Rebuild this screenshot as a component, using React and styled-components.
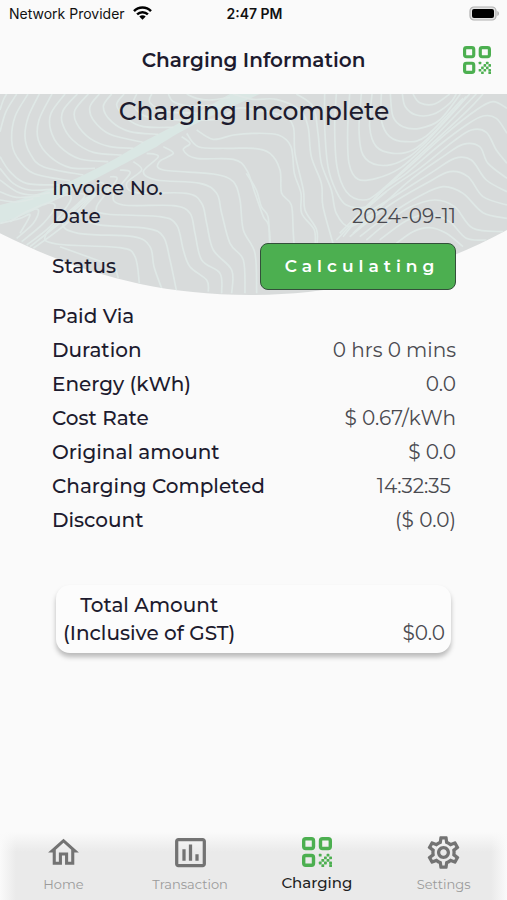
import React from 'react';
import styled, { createGlobalStyle } from 'styled-components';
import { MdOutlineHome, MdInsertChartOutlined, MdOutlineSettings } from 'react-icons/md';

const GlobalStyle = createGlobalStyle`
  * {
    box-sizing: border-box;
  }

  body {
    margin: 0;
    background: #fafafa;
    font-family: Montserrat, Inter, sans-serif;
    color: #1d1b2e;
  }
`;

const Page = styled.div`
  display: flex;
  flex-direction: column;
  min-height: 100vh;
`;

const StatusBar = styled.div`
  display: grid;
  grid-template-columns: 1fr auto 1fr;
  align-items: center;
  height: 26px;
  padding: 0 7px 0 9px;
  font-family: Inter, sans-serif;
  font-size: 14px;
  color: #111;
`;

const Carrier = styled.span`
  display: flex;
  align-items: center;
  gap: 8px;
`;

const Clock = styled.time`
  font-weight: 600;
`;

const BatterySlot = styled.span`
  display: flex;
  justify-content: flex-end;
`;

const Header = styled.header`
  display: grid;
  grid-template-columns: 40px 1fr 40px;
  align-items: center;
  height: 68px;
  padding: 0 10px;
`;

const HeaderTitle = styled.h1`
  margin: 0;
  text-align: center;
  font-size: 20px;
  line-height: 24px;
  font-weight: 600;
`;

const IconButton = styled.button`
  display: flex;
  justify-content: center;
  padding: 0;
  border: 0;
  background: none;
  color: #4caf50;
  cursor: pointer;
`;

const Main = styled.main`
  display: grid;
  grid-template-columns: 100%;
  flex: 1;
  align-content: start;
`;

const Backdrop = styled.svg`
  grid-area: 1 / 1;
  display: block;
  width: 100%;
  height: 202px;
`;

const Content = styled.div`
  grid-area: 1 / 1;
  display: flex;
  flex-direction: column;
  padding: 0 51px 48px 52px;
`;

const Heading = styled.h2`
  margin: 0 0 46px;
  text-align: center;
  font-size: 25px;
  line-height: 34px;
  font-weight: 500;
`;

const Details = styled.dl`
  margin: 0;
`;

const rowHeights = { compact: '28px', normal: '34px', tall: '69px' };

const Row = styled.div`
  display: flex;
  align-items: center;
  justify-content: space-between;
  height: ${({ $size }) => rowHeights[$size]};
  padding-top: ${({ $size }) => ($size === 'tall' ? '3px' : '0')};
  font-size: 20px;
`;

const Label = styled.dt`
  font-weight: 500;
`;

const Value = styled.dd`
  margin: 0;
  color: #4a4a50;
  font-weight: 400;
  white-space: pre;
`;

const StatusButton = styled.button`
  width: 196px;
  height: 47px;
  padding: 0 0 0 8px;
  border: 1px solid #33503a;
  border-radius: 8px;
  background: #4caf50;
  color: #fff;
  font: inherit;
  font-size: 17px;
  font-weight: 600;
  letter-spacing: 5px;
  cursor: pointer;
`;

const TotalCard = styled.section`
  display: flex;
  align-items: flex-end;
  justify-content: space-between;
  margin: 48px 5px 0 4px;
  padding: 6px 6px 6px 7px;
  border-radius: 14px;
  background: #fcfcfc;
  box-shadow: 0 4px 5px rgba(0, 0, 0, 0.26);
  font-size: 20px;
  line-height: 28px;
`;

const TotalLabel = styled.div`
  text-align: center;
  font-weight: 500;
`;

const TotalValue = styled.div`
  color: #4a4a50;
`;

const TabBar = styled.nav`
  display: grid;
  grid-template-columns: repeat(4, 1fr);
  height: 68px;
  background:
    linear-gradient(to bottom, #fafafa, rgba(250, 250, 250, 0) 20px),
    linear-gradient(to right, #fafafa, rgba(250, 250, 250, 0) 16px),
    linear-gradient(to left, #fafafa, rgba(250, 250, 250, 0) 16px),
    #eaeaea;
`;

const Tab = styled.a`
  display: flex;
  flex-direction: column;
  align-items: center;
  gap: 4px;
  padding-top: 2px;
  color: ${({ $active }) => ($active ? '#1f1f1f' : '#9b9b9b')};
  font-size: ${({ $active }) => ($active ? '15px' : '13px')};
  font-weight: ${({ $active }) => ($active ? 500 : 400)};
  line-height: ${({ $active }) => ($active ? '18px' : '20px')};
  text-decoration: none;
`;

const TabIcon = styled.span`
  display: flex;
  align-items: center;
  justify-content: center;
  height: 36px;
  color: ${({ $active }) => ($active ? '#4caf50' : '#737373')};
`;

// smooth path through a flat list of x, y pairs
function curve(...n) {
  const pts = [];
  for (let i = 0; i < n.length; i += 2) pts.push([n[i], n[i + 1]]);
  let d = `M${pts[0]}`;
  for (let i = 0; i < pts.length - 1; i++) {
    const p0 = pts[i - 1] || pts[i];
    const p1 = pts[i];
    const p2 = pts[i + 1];
    const p3 = pts[i + 2] || p2;
    const c1 = [p1[0] + (p2[0] - p0[0]) / 6, p1[1] + (p2[1] - p0[1]) / 6];
    const c2 = [p2[0] - (p3[0] - p1[0]) / 6, p2[1] - (p3[1] - p1[1]) / 6];
    d += `C${c1} ${c2} ${p2}`;
  }
  return d;
}

const leftContours = [
  curve(20, 12, 10, 30, 0, 60),
  curve(50, 12, 18, 65, 0, 125),
  curve(0, 200, 30, 245, 80, 280, 190, 285),
  curve(0, 235, 40, 280, 90, 300, 170, 297),
  curve(0, 270, 50, 305, 100, 315, 150, 308),
  curve(0, 305, 50, 322, 120, 318),
  curve(0, 330, 50, 336, 100, 326),
  curve(84, 12, 45, 80, 35, 150, 50, 200, 100, 250, 210, 272),
  curve(118, 12, 85, 80, 75, 140, 90, 190, 130, 230, 250, 255),
  curve(156, 12, 117, 90, 115, 150, 150, 200, 210, 233, 285, 235),
  curve(195, 12, 153, 70, 152, 120, 180, 170, 240, 207, 325, 215),
  curve(232, 12, 190, 60, 187, 100, 218, 150, 280, 187, 365, 195),
  curve(265, 12, 225, 60, 230, 100, 270, 145, 330, 170, 400, 175),
  curve(298, 12, 270, 50, 280, 90, 330, 133, 430, 157),
  curve(335, 12, 310, 50, 335, 95, 390, 125, 475, 133),
  curve(372, 12, 350, 45, 380, 85, 430, 110, 520, 112),
  curve(410, 12, 400, 45, 440, 80, 560, 92),
  curve(455, 12, 450, 38, 500, 65, 600, 70),
  curve(505, 12, 520, 35, 570, 48, 650, 45),
  curve(560, 12, 590, 25, 630, 30, 690, 22),
  curve(600, 90, 660, 85, 710, 55, 770, 60, 850, 78, 880, 110, 885, 190, 910, 300, 915, 360, 950, 420, 950, 470),
  curve(590, 120, 640, 148, 700, 135, 760, 130, 835, 135, 873, 170, 883, 250, 903, 310, 905, 370, 943, 420, 945, 470),
  curve(560, 130, 595, 170, 680, 175, 760, 175, 810, 190, 840, 240, 845, 310, 874, 345, 880, 430, 890, 600),
  curve(545, 140, 570, 160, 550, 180, 590, 205, 700, 208, 740, 240, 765, 310, 790, 380, 808, 420, 815, 600),
  curve(490, 170, 520, 190, 478, 215, 490, 240, 640, 252, 700, 275, 720, 330, 730, 420, 765, 490, 770, 610),
  curve(440, 190, 475, 200, 430, 245, 470, 270, 600, 280, 650, 310, 665, 370, 690, 460, 730, 510, 735, 610),
  curve(400, 215, 425, 240, 380, 280, 410, 308, 560, 310, 605, 340, 620, 400, 640, 480, 695, 540, 695, 610),
  curve(360, 240, 390, 250, 340, 315, 370, 345, 520, 347, 570, 370, 585, 430, 605, 510, 660, 550, 665, 610),
  curve(330, 260, 350, 270, 290, 350, 320, 372, 480, 380, 530, 405, 550, 480, 570, 530, 620, 570, 625, 605),
  curve(290, 275, 310, 290, 240, 370, 290, 403, 440, 415, 490, 440, 510, 510, 530, 605),
  curve(260, 295, 280, 310, 190, 395, 235, 430, 400, 440, 450, 470, 462, 530, 485, 595),
  curve(230, 310, 250, 325, 140, 430, 170, 462, 360, 473, 405, 500, 418, 580),
  curve(180, 470, 290, 510, 340, 530, 355, 565),
  curve(0, 400, 60, 385, 90, 375, 60, 430),
  curve(30, 395, 80, 365, 115, 360, 100, 400, 50, 445),
  curve(80, 365, 140, 340, 165, 350, 130, 400, 65, 455),
  curve(130, 345, 200, 315, 210, 335, 150, 410, 80, 465),
  curve(90, 470, 190, 390, 250, 330, 310, 300),
  curve(100, 475, 200, 400, 270, 325, 340, 290),
];

const rightContours = [
  curve(-60, 12, 0, 28, 70, 28, 140, 60, 165, 110, 175, 200, 205, 280, 210, 350, 240, 460),
  curve(130, 12, 180, 50, 195, 130, 205, 220, 235, 300, 250, 370, 290, 410, 360, 370),
  curve(215, 12, 215, 110, 225, 230, 248, 300, 280, 345, 340, 350, 400, 305),
  curve(250, 12, 245, 110, 252, 230, 280, 305, 330, 330, 380, 305, 500, 195, 640, 65, 690, 12),
  curve(290, 12, 284, 120, 288, 220, 315, 268, 370, 265, 440, 235, 520, 165, 670, 12),
  curve(325, 12, 318, 120, 330, 195, 375, 225, 440, 215, 510, 165, 650, 12),
  curve(357, 12, 350, 110, 370, 170, 420, 190, 480, 180, 540, 130, 640, 20),
  curve(385, 12, 385, 90, 410, 140, 460, 155, 520, 138, 630, 25),
  curve(412, 12, 420, 80, 450, 110, 500, 115, 560, 90, 622, 12),
  curve(448, 12, 457, 50, 490, 75, 540, 73, 590, 40, 610, 12),
  curve(480, 12, 500, 38, 545, 42, 590, 12),
  curve(762, 55, 720, 35, 670, 60, 580, 130, 480, 220, 380, 310, 260, 430),
  curve(762, 130, 730, 85, 690, 78, 640, 105, 560, 165, 460, 250, 380, 310, 270, 440),
  curve(762, 220, 730, 180, 700, 127, 655, 120, 600, 155, 500, 235, 380, 320, 250, 450),
  curve(762, 265, 705, 220, 680, 170, 630, 163, 570, 200, 460, 280, 300, 430),
  curve(762, 305, 700, 270, 655, 210, 605, 205, 540, 245, 430, 315, 340, 370),
  curve(762, 345, 690, 320, 645, 260, 590, 245, 520, 280, 410, 345, 290, 440),
  curve(762, 385, 690, 368, 630, 310, 570, 290, 500, 318, 400, 380, 320, 440),
  curve(750, 425, 660, 415, 605, 350, 545, 330, 470, 352, 400, 400, 340, 450),
  curve(700, 450, 640, 445, 590, 395, 530, 373, 460, 392, 380, 450),
  curve(630, 470, 580, 430, 530, 413, 480, 425, 430, 460),
  curve(-20, 250, 10, 300, 25, 350, 45, 380, 50, 460, 55, 600),
];

function TopoBackdrop() {
  return (
    <Backdrop viewBox="0 12 1521 606" preserveAspectRatio="none" aria-hidden="true">
      <defs>
        <clipPath id="bowl">
          <path d="M0 12H1521V420C1300 540 1040 615 750 615C450 615 220 540 0 430Z" />
        </clipPath>
      </defs>
      <g clipPath="url(#bowl)">
        <rect y="12" width="1521" height="606" fill="#d8dbdb" />
        <path
          d="M0 345C180 300 320 225 430 155C560 90 640 40 690 12H780C650 70 560 110 470 170C330 245 220 300 150 335C90 370 50 385 0 398Z"
          fill="#dae7e4"
        />
        <g fill="none" stroke="#dfe8e6" strokeWidth="5">
          {leftContours.map((d) => (
            <path key={d} d={d} />
          ))}
          <g transform="translate(759 0)">
            {rightContours.map((d) => (
              <path key={d} d={d} />
            ))}
          </g>
        </g>
      </g>
    </Backdrop>
  );
}

// filled cells of the 5x5 grid in the QR icon's last corner
const qrDots = [
  [0, 0], [3, 0],
  [2, 1], [4, 1],
  [1, 2], [3, 2],
  [0, 3], [2, 3], [4, 3],
  [1, 4], [4, 4],
];

function QrIcon({ size }) {
  return (
    <svg width={size} height={size} viewBox="0 0 30 30" aria-hidden="true">
      <g fill="none" stroke="currentColor" strokeWidth="3.4">
        <rect x="1.7" y="1.7" width="9.8" height="9.8" rx="2" />
        <rect x="18.5" y="1.7" width="9.8" height="9.8" rx="2" />
        <rect x="1.7" y="18.5" width="9.8" height="9.8" rx="2" />
      </g>
      <g fill="currentColor">
        {qrDots.map(([x, y]) => (
          <rect key={`${x}-${y}`} x={16.8 + x * 2.6} y={16.8 + y * 2.6} width="2.8" height="2.8" rx="0.6" />
        ))}
      </g>
    </svg>
  );
}

function WifiIcon() {
  return (
    <svg width="19" height="14" viewBox="0 0 19 14" aria-hidden="true">
      <g fill="none" stroke="#000" strokeWidth="2.5">
        <path d="M1 5.1C5.7.4 13.3.4 18 5.1" />
        <path d="M4.1 8.3c3-2.9 7.8-2.9 10.8 0" />
      </g>
      <path d="M6.3 10.5c1.8-1.7 4.6-1.7 6.4 0L9.5 13.7z" />
    </svg>
  );
}

function BatteryIcon() {
  return (
    <svg width="31" height="15" viewBox="0 0 31 15" aria-hidden="true">
      <rect x="1" y="1" width="26" height="13" rx="4" fill="#e4e4e4" stroke="#b0b0b0" strokeWidth="1.2" />
      <rect x="3" y="3" width="22" height="9" rx="2" />
      <path d="M28.4 5c2 .8 2 4.2 0 5z" fill="#aaa" />
    </svg>
  );
}

const details = [
  { label: 'Invoice No.', value: '', size: 'compact' },
  { label: 'Date', value: '2024-09-11', size: 'compact' },
  { label: 'Status', value: <StatusButton type="button">Calculating</StatusButton>, size: 'tall' },
  { label: 'Paid Via', value: '' },
  { label: 'Duration', value: '0 hrs 0 mins' },
  { label: 'Energy (kWh)', value: '0.0' },
  { label: 'Cost Rate', value: '$ 0.67/kWh' },
  { label: 'Original amount', value: '$ 0.0' },
  { label: 'Charging Completed', value: '14:32:35 ' },
  { label: 'Discount', value: '($ 0.0)' },
];

const tabs = [
  { label: 'Home', icon: <MdOutlineHome size={37} /> },
  { label: 'Transaction', icon: <MdInsertChartOutlined size={39} /> },
  { label: 'Charging', icon: <QrIcon size={30} />, active: true },
  { label: 'Settings', icon: <MdOutlineSettings size={39} /> },
];

function App() {
  return (
    <Page>
      <GlobalStyle />
      <StatusBar>
        <Carrier>
          Network Provider
          <WifiIcon />
        </Carrier>
        <Clock>2:47 PM</Clock>
        <BatterySlot>
          <BatteryIcon />
        </BatterySlot>
      </StatusBar>
      <Header>
        <span />
        <HeaderTitle>Charging Information</HeaderTitle>
        <IconButton type="button" aria-label="Scan QR code">
          <QrIcon size={28} />
        </IconButton>
      </Header>
      <Main>
        <TopoBackdrop />
        <Content>
          <Heading>Charging Incomplete</Heading>
          <Details>
            {details.map(({ label, value, size = 'normal' }) => (
              <Row key={label} $size={size}>
                <Label>{label}</Label>
                <Value>{value}</Value>
              </Row>
            ))}
          </Details>
          <TotalCard>
            <TotalLabel>
              Total Amount
              <br />
              (Inclusive of GST)
            </TotalLabel>
            <TotalValue>$0.0</TotalValue>
          </TotalCard>
        </Content>
      </Main>
      <TabBar>
        {tabs.map(({ label, icon, active }) => (
          <Tab key={label} href={`#${label.toLowerCase()}`} $active={active}>
            <TabIcon $active={active}>{icon}</TabIcon>
            {label}
          </Tab>
        ))}
      </TabBar>
    </Page>
  );
}

export default App;
